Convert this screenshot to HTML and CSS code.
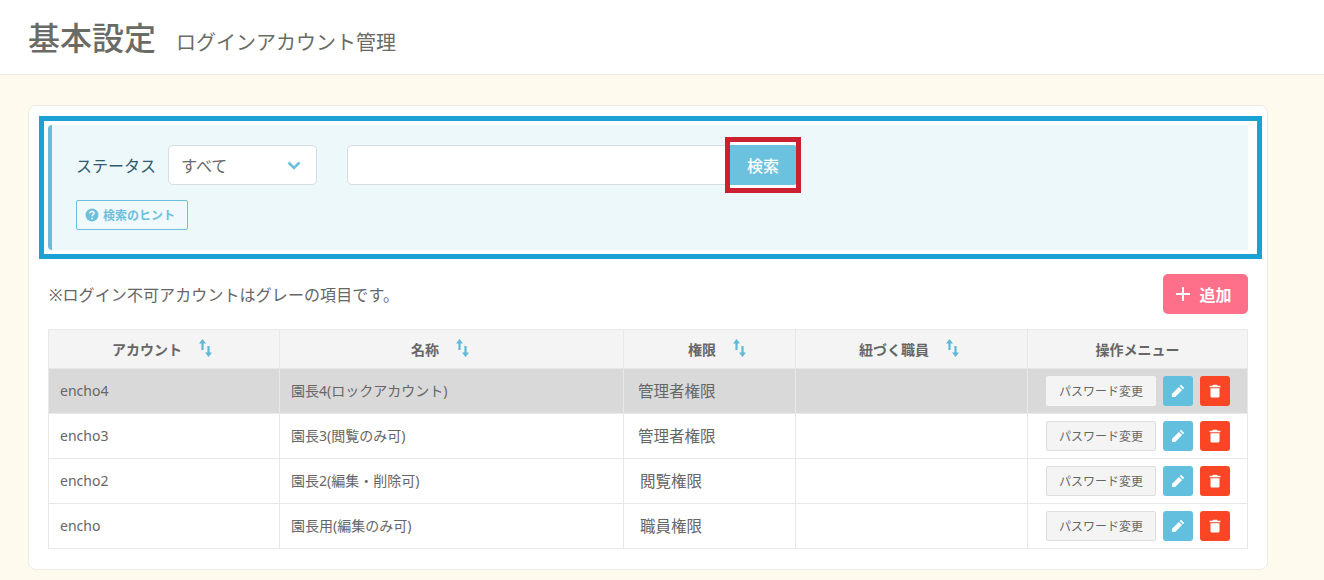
FILE: index.html
```html
<!DOCTYPE html>
<html lang="ja">
<head>
  <meta charset="UTF-8">
  <title>基本設定</title>
  <link rel="stylesheet" href="styles.css">
</head>
<body>

  <header class="page-head">
    <h1>基本設定</h1>
    <span class="sub">ログインアカウント管理</span>
  </header>

  <main class="card">
    <div class="mark-blue">
      <form class="search">
        <div class="search-row">
          <label class="status-label">ステータス</label>
          <div class="select">
            <span>すべて</span>
            <svg class="chevron" viewBox="0 0 14 9"><path d="M1.5 1.5 7 7l5.5-5.5" fill="none" stroke="#6cc0dc" stroke-width="2.6"/></svg>
          </div>
          <div class="text-input"></div>
          <div class="mark-red"><button type="button" class="search-btn">検索</button></div>
        </div>
        <button type="button" class="hint">
          <svg viewBox="0 0 14 14"><circle cx="7" cy="7" r="6.5" fill="#6cc0dc"/><path d="M4.9 5.4c0-1.2 1-1.9 2.1-1.9s2.1.7 2.1 1.8c0 1.5-2 1.5-2 2.9" fill="none" stroke="#fff" stroke-width="1.4"/><circle cx="7.1" cy="10.4" r=".9" fill="#fff"/></svg>
          検索のヒント
        </button>
      </form>
    </div>

    <div class="tools">
      <p>※ログイン不可アカウントはグレーの項目です。</p>
      <button type="button" class="add"><span class="plus"></span>追加</button>
    </div>

    <table class="accounts">
      <colgroup>
        <col class="c1"><col class="c2"><col class="c3"><col class="c4"><col class="c5">
      </colgroup>
      <thead>
        <tr>
          <th class="th-account">アカウント<svg class="sort" viewBox="0 0 15 18"><use href="#sort-icon"/></svg></th>
          <th class="th-name">名称<svg class="sort" viewBox="0 0 15 18"><use href="#sort-icon"/></svg></th>
          <th class="th-role">権限<svg class="sort" viewBox="0 0 15 18"><use href="#sort-icon"/></svg></th>
          <th class="th-staff">紐づく職員<svg class="sort" viewBox="0 0 15 18"><use href="#sort-icon"/></svg></th>
          <th>操作メニュー</th>
        </tr>
      </thead>
      <tbody>
        <tr class="locked">
          <td>encho4</td>
          <td class="name">園長4(ロックアカウント)</td>
          <td class="role">管理者権限</td>
          <td></td>
          <td class="ops"><button type="button" class="pw">パスワード変更</button><button type="button" class="icon edit"><svg viewBox="0 0 14 14"><use href="#pen-icon"/></svg></button><button type="button" class="icon del"><svg viewBox="0 0 14 14"><use href="#bin-icon"/></svg></button></td>
        </tr>
        <tr>
          <td>encho3</td>
          <td class="name">園長3(閲覧のみ可)</td>
          <td class="role">管理者権限</td>
          <td></td>
          <td class="ops"><button type="button" class="pw">パスワード変更</button><button type="button" class="icon edit"><svg viewBox="0 0 14 14"><use href="#pen-icon"/></svg></button><button type="button" class="icon del"><svg viewBox="0 0 14 14"><use href="#bin-icon"/></svg></button></td>
        </tr>
        <tr>
          <td>encho2</td>
          <td class="name">園長2(編集・削除可)</td>
          <td class="role short">閲覧権限</td>
          <td></td>
          <td class="ops"><button type="button" class="pw">パスワード変更</button><button type="button" class="icon edit"><svg viewBox="0 0 14 14"><use href="#pen-icon"/></svg></button><button type="button" class="icon del"><svg viewBox="0 0 14 14"><use href="#bin-icon"/></svg></button></td>
        </tr>
        <tr>
          <td>encho</td>
          <td class="name">園長用(編集のみ可)</td>
          <td class="role short">職員権限</td>
          <td></td>
          <td class="ops"><button type="button" class="pw">パスワード変更</button><button type="button" class="icon edit"><svg viewBox="0 0 14 14"><use href="#pen-icon"/></svg></button><button type="button" class="icon del"><svg viewBox="0 0 14 14"><use href="#bin-icon"/></svg></button></td>
        </tr>
      </tbody>
    </table>
  </main>

  <svg class="defs" width="0" height="0">
    <defs>
      <g id="sort-icon">
        <path d="M4.5 0 8 4.5H5.6V11H3.4V4.5H1z" fill="#5fb8d6"/>
        <path d="M10.5 18 7 13.5h2.4V7h2.2v6.5H14z" fill="#5fb8d6"/>
      </g>
      <path id="pen-icon" d="M10 .8 13.2 4l-1.3 1.3-3.2-3.2zM7.9 2.9l3.2 3.2-7 7H.9V9.9z" fill="#fff"/>
      <path id="bin-icon" d="M5 .8h4l.6 1H12.4v1.5H1.6V1.8h2.8zM2.5 4.3h9v8a1.3 1.3 0 0 1-1.3 1.3H3.8a1.3 1.3 0 0 1-1.3-1.3z" fill="#fff"/>
    </defs>
  </svg>

</body>
</html>
```

FILE: styles.css
```css
* {
  box-sizing: border-box;
}
body {
  margin: 0;
  background: #fffaee;
  color: #666;
  font-family: "Noto Sans", "Noto Sans CJK JP", sans-serif;
  font-size: 14px;
  overflow: hidden;
}
button {
  font-family: inherit;
  cursor: pointer;
}
.defs {
  position: absolute;
}

/* header */
.page-head {
  display: flex;
  align-items: baseline;
  height: 75px;
  padding: 15px 28px 0;
  background: #fff;
  border-bottom: 1px solid #eeeae2;
}
.page-head h1 {
  margin: 0;
  font-size: 32px;
  font-weight: 500;
  line-height: 46px;
  color: #6b6b66;
}
.page-head .sub {
  margin-left: 20px;
  font-size: 20px;
  color: #6b6b66;
}

/* card */
.card {
  width: 1240px;
  height: 465px;
  margin: 30px 0 0 28px;
  padding: 10px 5px 0 10px;
  background: #fff;
  border: 1px solid #f0ece4;
  border-radius: 8px;
}
.mark-blue {
  height: 143px;
  padding: 4px 9px 4px 4px;
  border: 5px solid #1ba1d6;
}
.search {
  height: 125px;
  padding: 20px 24px 0;
  background: #edf8fb;
  border-left: 4px solid #6cbcd6;
  border-radius: 4px 0 0 4px;
}
.search-row {
  display: flex;
  align-items: center;
  height: 40px;
}
.status-label {
  width: 92px;
  font-size: 16px;
  color: #2f5a6c;
}
.select {
  display: flex;
  align-items: center;
  justify-content: space-between;
  width: 149px;
  height: 40px;
  padding: 0 15px 0 12px;
  font-size: 16px;
  background: #fff;
  border: 1px solid #d8dde2;
  border-radius: 5px;
}
.chevron {
  width: 14px;
  height: 9px;
}
.text-input {
  width: 380px;
  height: 40px;
  margin-left: 30px;
  background: #fff;
  border: 1px solid #d8dde2;
  border-radius: 5px 0 0 5px;
}
.mark-red {
  flex: none;
  width: 76px;
  height: 56px;
  margin-left: -2px;
  border: 5px solid #cc1f2f;
  background: #fff;
}
.search-btn {
  display: block;
  width: 66px;
  height: 46px;
  border: 0;
  border-top: 3px solid #fff;
  border-bottom: 3px solid #fff;
  border-radius: 0 4px 4px 0;
  background: #6ac2de;
  color: #fff;
  font-size: 16px;
  font-weight: 500;
}
.hint {
  display: flex;
  align-items: center;
  gap: 4px;
  width: 112px;
  height: 30px;
  margin-top: 15px;
  padding: 0 8px;
  background: #f0fafc;
  border: 1px solid #6cc0dc;
  border-radius: 2px;
  color: #6cc0dc;
  font-size: 12px;
  font-weight: 700;
  white-space: nowrap;
}
.hint svg {
  width: 14px;
  height: 14px;
  flex: none;
}

/* count row */
.tools {
  display: flex;
  align-items: center;
  justify-content: space-between;
  width: 1200px;
  height: 40px;
  margin: 15px 0 15px 9px;
}
.tools p {
  margin: 0 0 0 1px;
  font-size: 16px;
  letter-spacing: 0.1px;
  color: #666;
}
.add {
  display: flex;
  align-items: center;
  justify-content: center;
  gap: 9px;
  width: 85px;
  height: 40px;
  padding: 0 3px 0 0;
  background: #fe7089;
  border: 0;
  border-radius: 5px;
  color: #fff;
  font-size: 16px;
  font-weight: 700;
}
.plus {
  width: 14px;
  height: 14px;
  background:
    linear-gradient(#fff, #fff) center / 100% 2px no-repeat,
    linear-gradient(#fff, #fff) center / 2px 100% no-repeat;
}

/* table */
.accounts {
  width: 1199px;
  margin-left: 9px;
  table-layout: fixed;
  border-collapse: collapse;
  border: 1px solid #e8e8e8;
}
.c1 { width: 231px; }
.c2 { width: 344px; }
.c3 { width: 172px; }
.c4 { width: 232px; }
.c5 { width: 220px; }
.accounts th,
.accounts td {
  border: 1px solid #e8e8e8;
  font-size: 14px;
}
.accounts th {
  height: 39px;
  padding: 0;
  background: #f4f4f4;
  font-weight: 700;
  color: #666;
  text-align: center;
}
.accounts .th-account { padding-right: 3px; }
.accounts .th-name { padding-right: 22px; }
.accounts .th-role { padding-left: 16px; }
.accounts .th-staff { padding-right: 4px; }
.sort {
  width: 15px;
  height: 18px;
  margin-left: 16px;
  vertical-align: -2px;
}
.accounts td {
  height: 45px;
  padding: 0 11px 2px;
  color: #666;
}
.accounts td.role {
  padding-left: 14px;
  font-size: 15.5px;
}
.accounts td.role.short {
  padding-left: 16px;
}
.locked td {
  background: #d9d9d9;
}
.accounts td.ops {
  padding: 0 17px 0 18px;
}
.ops {
  white-space: nowrap;
}
.pw {
  width: 110px;
  height: 30px;
  margin-right: 7px;
  padding: 0;
  background: #f4f4f4;
  border: 1px solid #ddd;
  border-radius: 2px;
  color: #666;
  font-size: 12px;
  vertical-align: middle;
}
.locked .pw {
  border-color: #f4f4f4;
}
.icon {
  width: 30px;
  height: 30px;
  margin-right: 7px;
  padding: 0;
  border: 0;
  border-radius: 3px;
  vertical-align: middle;
}
.icon:last-child {
  margin-right: 0;
}
.icon svg {
  display: block;
  width: 14px;
  height: 14px;
  margin: auto;
}
.edit {
  background: #62bfdd;
}
.del {
  background: #fb4626;
}
```
